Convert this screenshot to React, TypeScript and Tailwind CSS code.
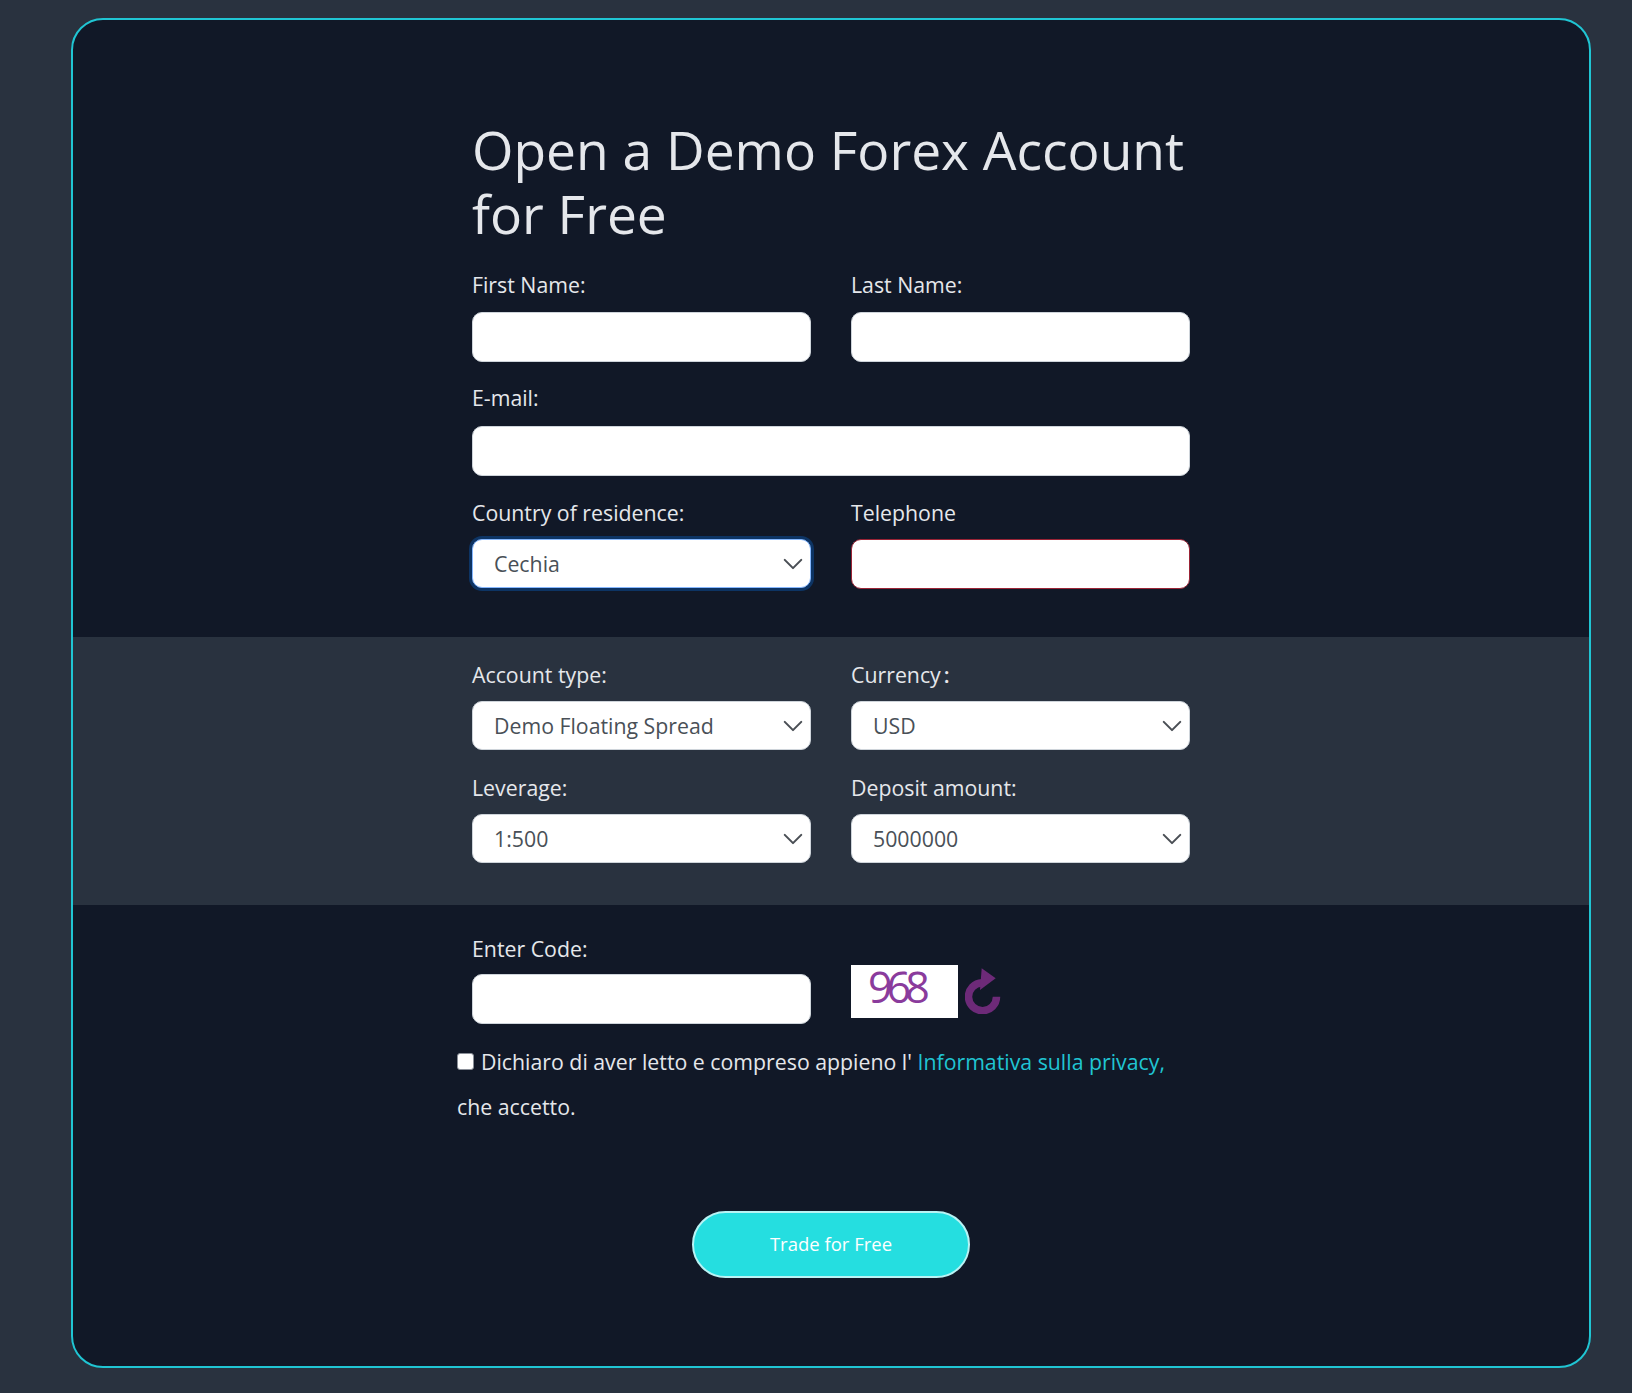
const labelCls = 'block text-[21.3px] leading-[27px] text-[#e5e7eb]'
const inputCls = 'block w-full h-[50px] rounded-[10px] border border-[#ced4da] bg-white px-[21px] outline-none'

function Field({ label, className = '', children }: { label: React.ReactNode; className?: string; children: React.ReactNode }) {
  return (
    <div className={className}>
      <label className={labelCls}>{label}</label>
      {children}
    </div>
  )
}

function Select({ value, focused = false, small = false }: { value: string; focused?: boolean; small?: boolean }) {
  return (
    <div className="relative">
      <select
        defaultValue={value}
        className={`block w-full appearance-none rounded-[10px] border bg-white px-[21px] text-[21.3px] text-[#495057] outline-none ${small ? 'h-[49px] pt-[1px]' : 'h-[49px]'} ${focused ? 'border-[#86b7fe] shadow-[0_0_0_3px_#0d3464]' : 'border-[#ced4da]'}`}
      >
        <option>{value}</option>
      </select>
      <svg
        viewBox="0 0 16 16"
        fill="none"
        className="pointer-events-none absolute right-[7px] top-1/2 h-[22px] w-[22px] -translate-y-1/2"
      >
        <path d="M2 5l6 6 6-6" stroke="#4a4f55" strokeWidth="1.5" strokeLinecap="round" strokeLinejoin="round" />
      </svg>
    </div>
  )
}

export default function App() {
  return (
    <div className="min-h-[1393px] overflow-hidden bg-[#29323f] pt-[18px] font-['Open_Sans',sans-serif]">
      <div className="ml-[71px] h-[1350px] w-[1520px] overflow-hidden rounded-[32px] border-2 border-[#20c5d3] bg-[#111827]">
        {/* top block */}
        <div className="h-[617px] pl-[399px] pt-[98px]">
          <div className="w-[718px]">
            <h1 className="text-[53.3px] font-normal leading-[64px] text-[#e5e7eb]">
              Open a Demo Forex Account
              <br />
              for Free
            </h1>
            <div className="mt-[25px] grid grid-cols-2 gap-x-[40px]">
              <Field label="First Name:">
                <input className={`${inputCls} mt-[14px]`} />
              </Field>
              <Field label="Last Name:">
                <input className={`${inputCls} mt-[14px]`} />
              </Field>
            </div>
            <Field label="E-mail:" className="mt-[22px]">
              <input className={`${inputCls} mt-[15px]`} />
            </Field>
            <div className="mt-[23px] grid grid-cols-2 gap-x-[40px]">
              <Field label="Country of residence:">
                <div className="mt-[13px]">
                  <Select value="Cechia" focused />
                </div>
              </Field>
              <Field label="Telephone">
                <input className="mt-[13px] block h-[50px] w-full rounded-[10px] border border-[#9a2436] bg-white outline-none" />
              </Field>
            </div>
          </div>
        </div>

        {/* account options band */}
        <div className="h-[268px] bg-[#29323f] pl-[399px] pt-[24px]">
          <div className="grid w-[718px] grid-cols-2 gap-x-[40px] gap-y-[24px]">
            <Field label="Account type:">
              <div className="mt-[13px]">
                <Select value="Demo Floating Spread" small />
              </div>
            </Field>
            <Field label={<>Currency<span className="ml-[3px] font-semibold">:</span></>}>
              <div className="mt-[13px]">
                <Select value="USD" small />
              </div>
            </Field>
            <Field label="Leverage:">
              <div className="mt-[13px]">
                <Select value="1:500" small />
              </div>
            </Field>
            <Field label="Deposit amount:">
              <div className="mt-[13px]">
                <Select value="5000000" small />
              </div>
            </Field>
          </div>
        </div>

        {/* captcha, consent, submit */}
        <div className="pl-[399px] pt-[30px]">
          <div className="grid w-[718px] grid-cols-2 gap-x-[40px]">
            <Field label="Enter Code:">
              <input className={`${inputCls} mt-[12px]`} />
            </Field>
            <div className="flex items-start pt-[30px]">
              <div className="flex h-[53px] w-[107px] items-center bg-white pb-[11px] pl-[17px] text-[43px] font-medium leading-none tracking-[-6px] text-[#8a3b9c]">
                968
              </div>
              <svg width="36" height="46" viewBox="0 0 36 46" className="ml-[7px] mt-[3px]" fill="none">
                <path d="M31.5 28.7A14 14 0 1 1 17 14.7" stroke="#6d2a78" strokeWidth="7.5" />
                <path d="M16.7 0.3L30.7 10.3L15 22Z" fill="#6d2a78" />
              </svg>
            </div>
          </div>
          <div className="-ml-[15px] mt-[15px] w-[720px] text-[21.3px] leading-[45px] text-[#e5e7eb]">
            <input
              type="checkbox"
              className="mr-[7px] inline-block h-[17px] w-[17px] appearance-none rounded-[3px] border border-[#8a8f98] bg-white align-[0px]"
            />
            Dichiaro di aver letto e compreso appieno l'{' '}
            <a className="text-[#20c5d3]">Informativa sulla privacy,</a>
            <br />
            che accetto.
          </div>
        </div>
        <div className="mt-[82px] flex justify-center">
          <button
            type="button"
            className="h-[67px] w-[278px] rounded-full border-2 border-[#b8f3f4] bg-[#25dee0] pb-[2px] text-[18.5px] text-white"
          >
            Trade for Free
          </button>
        </div>
      </div>
    </div>
  )
}
